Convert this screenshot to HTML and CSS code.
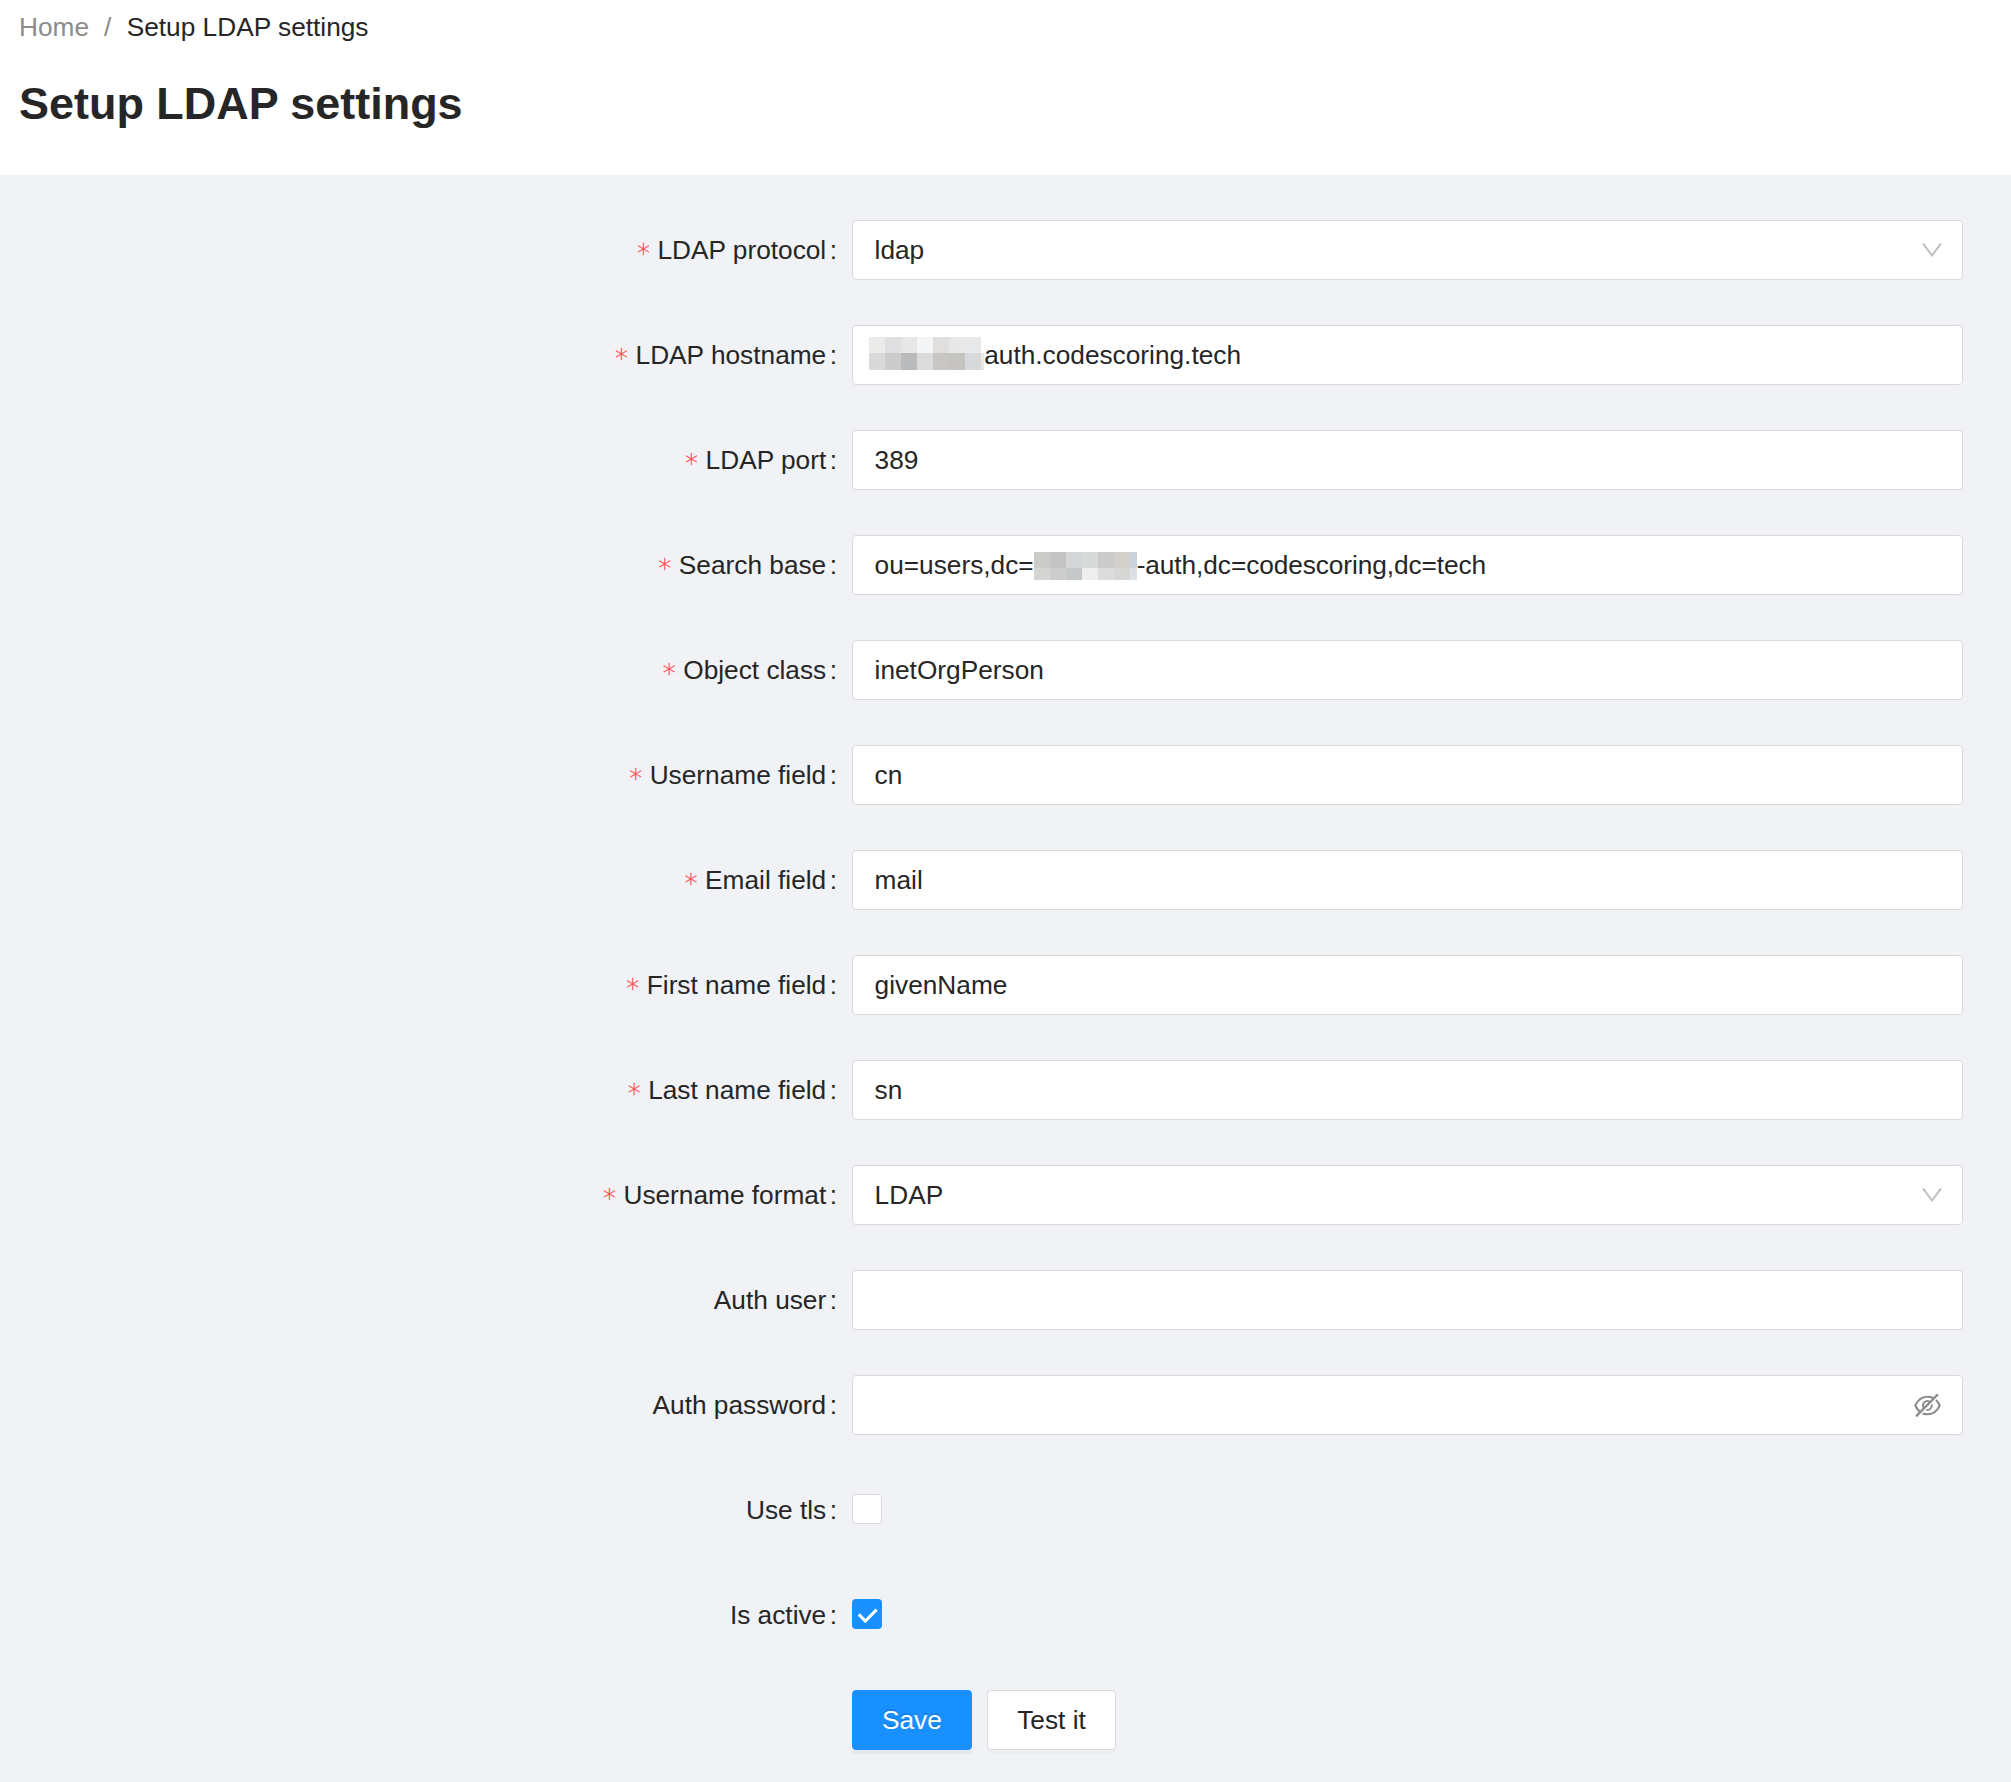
FILE: index.html
```html
<!DOCTYPE html>
<html lang="en">
<head>
<meta charset="utf-8">
<title>Setup LDAP settings</title>
<link rel="stylesheet" href="styles.css">
</head>
<body>
<header class="page-header">
  <nav class="breadcrumb"><a class="crumb">Home</a><span class="separator">/</span><span>Setup LDAP settings</span></nav>
  <h1 class="title">Setup LDAP settings</h1>
</header>
<main class="form">
  <div class="row"><label class="label required">LDAP protocol</label><div class="field select"><span>ldap</span><svg class="chevron" viewBox="0 0 20 14"><path d="M1 .5 10 12.5 19 .5" fill="none" stroke="currentColor" stroke-width="2"/></svg></div></div>
  <div class="row"><label class="label required">LDAP hostname</label><div class="field masked"><svg class="mask-host" viewBox="0 0 115 33" shape-rendering="crispEdges"><path fill="#ebebe9" d="M0 0h16v17H0z"/><path fill="#dfdfe1" d="M16 0h16v17H16z"/><path fill="#e7e7e7" d="M32 0h16v17H32z"/><path fill="#f3f5f7" d="M48 0h16v17H48z"/><path fill="#e1dfdd" d="M64 0h16v17H64z"/><path fill="#e8e8e8" d="M80 0h16v17H80z"/><path fill="#e8e9eb" d="M96 0h16v17H96z"/><path fill="#d9d9d9" d="M0 16h16v17H0z"/><path fill="#cbcbcb" d="M16 16h16v17H16z"/><path fill="#b9babb" d="M32 16h16v17H32z"/><path fill="#dbdbdb" d="M48 16h16v17H48z"/><path fill="#c9c7c5" d="M64 16h16v17H64z"/><path fill="#c6c4c1" d="M80 16h16v17H80z"/><path fill="#d7d9da" d="M96 16h16v17H96z"/><path fill="#e8e8e8" d="M112 16h3v17h-3z"/></svg><span>auth.codescoring.tech</span></div></div>
  <div class="row"><label class="label required">LDAP port</label><div class="field">389</div></div>
  <div class="row"><label class="label required">Search base</label><div class="field"><span>ou=users,dc=</span><svg class="mask-base" viewBox="0 0 103 28" shape-rendering="crispEdges"><path fill="#cbcbc7" d="M0 0h16v16H0z"/><path fill="#c3c3c4" d="M16 0h16v16H16z"/><path fill="#d5d6d8" d="M32 0h16v16H32z"/><path fill="#d8dada" d="M48 0h16v16H48z"/><path fill="#cbcbcc" d="M64 0h16v16H64z"/><path fill="#d3cfcb" d="M80 0h16v16H80z"/><path fill="#cbd3da" d="M96 0h7v16h-7z"/><path fill="#d5d5d4" d="M0 16h16v12H0z"/><path fill="#cdcdce" d="M16 16h16v12H16z"/><path fill="#c4c8c9" d="M32 16h16v12H32z"/><path fill="#eee" d="M48 16h16v12H48z"/><path fill="#dcdcdd" d="M64 16h16v12H64z"/><path fill="#d6d6d5" d="M80 16h16v12H80z"/><path fill="#dbe0e5" d="M96 16h7v12h-7z"/></svg><span class="suffix">-auth,dc=codescoring,dc=tech</span></div></div>
  <div class="row"><label class="label required">Object class</label><div class="field">inetOrgPerson</div></div>
  <div class="row"><label class="label required">Username field</label><div class="field">cn</div></div>
  <div class="row"><label class="label required">Email field</label><div class="field">mail</div></div>
  <div class="row"><label class="label required">First name field</label><div class="field">givenName</div></div>
  <div class="row"><label class="label required">Last name field</label><div class="field">sn</div></div>
  <div class="row"><label class="label required">Username format</label><div class="field select"><span>LDAP</span><svg class="chevron" viewBox="0 0 20 14"><path d="M1 .5 10 12.5 19 .5" fill="none" stroke="currentColor" stroke-width="2"/></svg></div></div>
  <div class="row"><label class="label">Auth user</label><div class="field"></div></div>
  <div class="row"><label class="label">Auth password</label><div class="field password"><svg class="eye" viewBox="0 0 1024 1024" fill="currentColor"><path d="M942.2 486.2Q889.47 375.11 816.7 305l-50.88 50.88C807.31 395.53 843.45 447.4 874.7 512 791.5 684.2 673.4 766 512 766q-72.67 0-133.87-22.38L323 798.75Q408 838 512 838q288.3 0 430.2-300.3a60.29 60.29 0 000-51.5zm-63.57-320.64L836 122.88a8 8 0 00-11.32 0L715.31 232.2Q624.86 186 512 186q-288.3 0-430.2 300.3a60.3 60.3 0 000 51.5q56.69 119.4 136.5 191.41L112.48 835a8 8 0 000 11.31L155.17 889a8 8 0 0011.31 0l712.15-712.12a8 8 0 000-11.32zM149.3 512C232.6 339.8 350.7 258 512 258c54.54 0 104.13 9.36 149.12 28.39l-70.3 70.3a176 176 0 00-238.13 238.13l-83.42 83.42C223.1 637.49 183.3 582.28 149.3 512zm246.7 0a112.11 112.11 0 01146.2-106.69L401.31 546.2A112 112 0 01396 512z"/><path d="M508 624c-3.46 0-6.87-.16-10.25-.47l-52.82 52.82a176.09 176.09 0 00227.42-227.42l-52.82 52.82c.31 3.38.47 6.79.47 10.25a111.94 111.94 0 01-112 112z"/></svg></div></div>
  <div class="row"><label class="label">Use tls</label><span class="checkbox"></span></div>
  <div class="row"><label class="label">Is active</label><span class="checkbox checked"><svg class="tick" viewBox="0 0 30 30"><path d="M6.8 15.4 13.3 22 24.6 10.6" fill="none" stroke="currentColor" stroke-width="3"/></svg></span></div>
  <div class="row actions"><button class="button primary">Save</button><button class="button">Test it</button></div>
</main>
</body>
</html>
```
FILE: styles.css
```css
* { box-sizing: border-box; }
body {
  margin: 0;
  min-height: 1782px;
  background: #f0f2f5;
  color: #262626;
  font: 26.25px/41px "Liberation Sans", Arial, sans-serif;
}
.page-header { height: 175px; padding: 7px 19px; background: #fff; }
.breadcrumb { display: flex; color: #262626; }
.crumb, .separator { color: #8c8c8c; }
.separator { margin: 0 15.4px 0 15px; }
.title { margin: 26px 0 0; font-size: 44.95px; line-height: 60px; font-weight: 700; }
.form { display: flex; flex-direction: column; gap: 45px; padding: 45px 48px 32px 0; }
.row { display: grid; grid-template-columns: 852px 1fr; align-items: center; height: 60px; }
.label { display: flex; justify-content: flex-end; align-items: center; }
.label::after { content: ":"; margin: 0 15px 0 3.5px; }
.required::before {
  content: "*";
  margin: 7px 7.5px 0 0;
  color: #ff4d4f;
  font: 200 26px/32px "DejaVu Sans", sans-serif;
  -webkit-text-stroke: .35px #ff4d4f;
}
.field {
  display: flex;
  align-items: center;
  height: 60px;
  padding: 0 20.5px 0 21.6px;
  border: 1px solid #d9d9d9;
  border-radius: 4px;
  background: #fff;
}
.select { justify-content: space-between; }
.password { justify-content: flex-end; }
.masked { padding-left: 16px; }
.chevron { width: 20px; height: 14px; color: #bfbfbf; }
.eye { width: 31px; height: 31px; margin-right: -1px; color: #8c8c8c; }
.mask-host { width: 115px; height: 33px; margin: 0 .2px 3px 0; }
.mask-base { width: 103px; height: 28px; margin-top: 2px; }
.suffix { letter-spacing: -.08px; }
.checkbox { width: 30px; height: 30px; margin-bottom: 2px; border: 1px solid #d9d9d9; border-radius: 4px; background: #fff; }
.checked { display: flex; border: 0; background: #1890ff; color: #fff; }
.tick { width: 30px; height: 30px; }
.actions { display: flex; gap: 15px; padding-left: 852px; }
.button {
  height: 60px;
  padding: 0 29.4px;
  border: 1px solid #d9d9d9;
  border-radius: 4px;
  background: #fff;
  color: #262626;
  font: inherit;
  box-shadow: 0 4px 0 rgba(0, 0, 0, .016);
}
.primary {
  padding: 0 29px;
  border-color: #1890ff;
  background: #1890ff;
  color: #fff;
  text-shadow: 0 -2px 0 rgba(0, 0, 0, .12);
  box-shadow: 0 4px 0 rgba(0, 0, 0, .045);
}
```
